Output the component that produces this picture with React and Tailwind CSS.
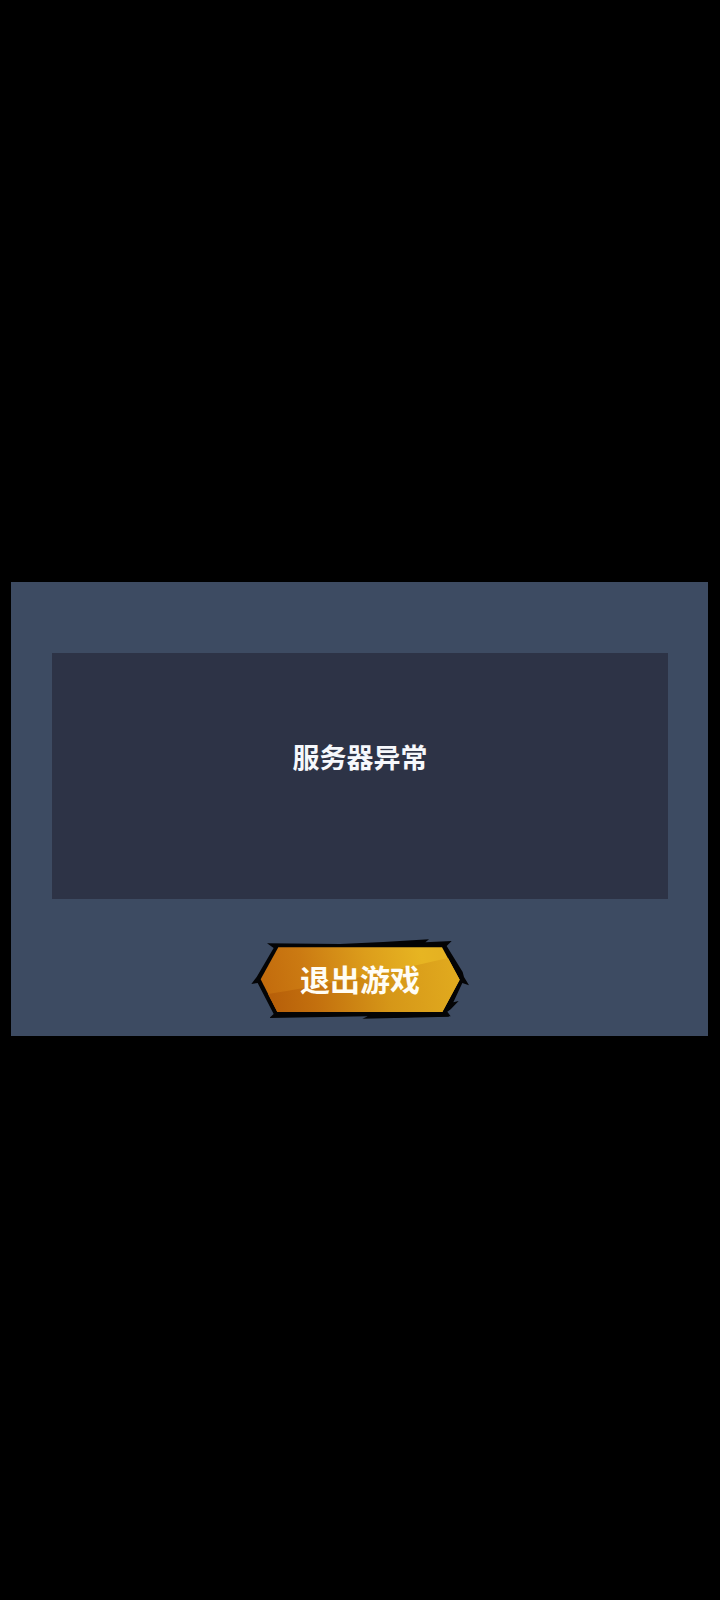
function ButtonPlate() {
  return (
    <svg
      aria-hidden="true"
      viewBox="30 36 660 252"
      preserveAspectRatio="none"
      className="absolute inset-0 h-full w-full"
    >
      <defs>
        <linearGradient id="gold" gradientUnits="userSpaceOnUse" x1="60" y1="200" x2="600" y2="90">
          <stop offset="0" stopColor="#c26a0c" />
          <stop offset="0.25" stopColor="#cb7a12" />
          <stop offset="0.6" stopColor="#dc9d1b" />
          <stop offset="0.9" stopColor="#e7b522" />
          <stop offset="1" stopColor="#e5b222" />
        </linearGradient>
        <linearGradient id="goldShade" gradientUnits="userSpaceOnUse" x1="90" y1="230" x2="640" y2="170">
          <stop offset="0" stopColor="#b75f09" />
          <stop offset="0.25" stopColor="#c3700e" />
          <stop offset="0.65" stopColor="#d69718" />
          <stop offset="1" stopColor="#e0a91e" />
        </linearGradient>
      </defs>
      <path
        fill="#040405"
        d="M81 55 L300 57 L430 51 L567 43 L556 52 L635 48 L620 63 L668 141 L672 156 L687 181 L667 174 L640 232 L656 228 L632 253 L622 260 L632 274 L375 279 L384 274 L88 279 L101 267 L53 174 L34 177 L50 156 L101 69 Z"
      />
      <path fill="#040405" d="M367 281 L392 270 L628 270 L626 275 Z" />
      <path fill="url(#gold)" d="M115 67 L606 67 L659 164 L607 261 L112 261 L62 163 Z" />
      <path
        fill="url(#goldShade)"
        d="M84 207 C230 184 410 148 624 99 L659 164 L607 261 L112 261 Z"
      />
    </svg>
  );
}

export default function App() {
  return (
    <main className="flex min-h-screen flex-col justify-center bg-black pt-[18px] pr-3 pl-[11px] font-['Noto_Sans_CJK_SC',sans-serif] text-white">
      <section
        role="alertdialog"
        aria-labelledby="message"
        className="flex flex-col items-center bg-[#3d4b62] pt-[71px] pr-10 pb-[15px] pl-[41px]"
      >
        <div className="flex min-h-[246px] w-full items-center justify-center bg-[#2d3346] pb-[38px]">
          <p id="message" className="text-[27px] leading-10 font-bold text-[#f6f8fc]">
            服务器异常
          </p>
        </div>
        <button
          type="button"
          className="relative mt-[38px] flex h-[84px] w-[220px] cursor-pointer items-center justify-center pb-0.5"
        >
          <ButtonPlate />
          <span className="relative text-[30px] leading-10 font-bold text-[#fffdf5]">退出游戏</span>
        </button>
      </section>
    </main>
  );
}
